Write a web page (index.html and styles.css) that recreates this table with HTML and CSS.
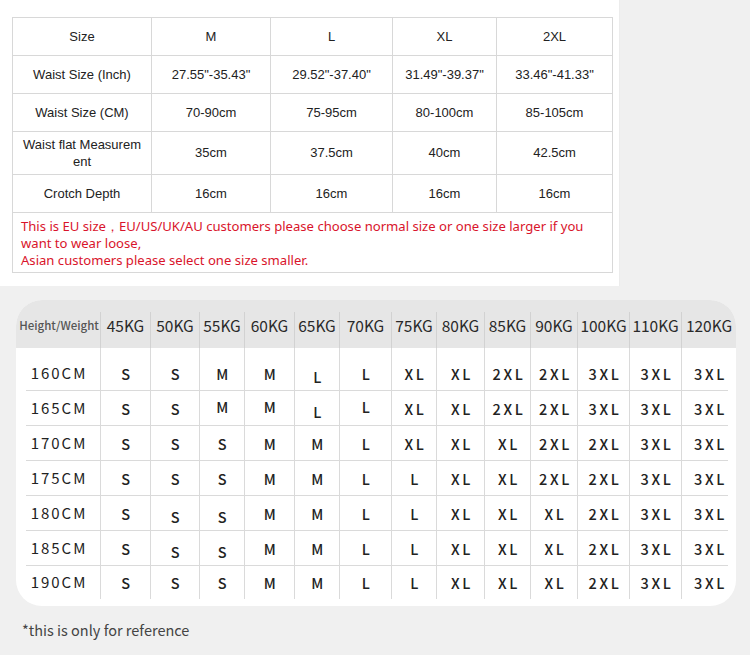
FILE: index.html
```html
<!DOCTYPE html>
<html lang="en">
<head>
<meta charset="utf-8">
<title>Size Chart</title>
<link rel="stylesheet" href="styles.css">
</head>
<body>
<section class="top">
  <table class="spec">
    <colgroup>
      <col class="c1"><col class="c2"><col class="c3"><col class="c4"><col class="c5">
    </colgroup>
    <tr class="r38"><td>Size</td><td>M</td><td>L</td><td>XL</td><td>2XL</td></tr>
    <tr class="r38"><td>Waist Size (Inch)</td><td>27.55"-35.43"</td><td>29.52"-37.40"</td><td>31.49"-39.37"</td><td>33.46"-41.33"</td></tr>
    <tr class="r38"><td>Waist Size (CM)</td><td>70-90cm</td><td>75-95cm</td><td>80-100cm</td><td>85-105cm</td></tr>
    <tr class="r43"><td class="wrap">Waist flat Measurem<br>ent</td><td>35cm</td><td>37.5cm</td><td>40cm</td><td>42.5cm</td></tr>
    <tr class="r38"><td>Crotch Depth</td><td>16cm</td><td>16cm</td><td>16cm</td><td>16cm</td></tr>
    <tr class="r60"><td colspan="5" class="note">This is EU size，EU/US/UK/AU customers please choose normal size or one size larger if you<br>want to wear loose,<br>Asian customers please select one size smaller.</td></tr>
  </table>
</section>
<section class="bottom">
  <div class="card">
    <div class="head grid">
      <div class="hc first">Height/Weight</div>
      <div class="hc">45KG</div><div class="hc">50KG</div><div class="hc">55KG</div><div class="hc">60KG</div><div class="hc">65KG</div><div class="hc">70KG</div><div class="hc">75KG</div><div class="hc">80KG</div><div class="hc">85KG</div><div class="hc">90KG</div><div class="hc">100KG</div><div class="hc">110KG</div><div class="hc">120KG</div>
    </div>
    <div class="body">
      <div class="row grid firstrow">
        <div class="c lab">160CM</div><div class="c">S</div><div class="c">S</div><div class="c">M</div><div class="c">M</div><div class="c lo">L</div><div class="c">L</div><div class="c">XL</div><div class="c">XL</div><div class="c">2XL</div><div class="c">2XL</div><div class="c">3XL</div><div class="c">3XL</div><div class="c">3XL</div>
      </div>
      <div class="row grid">
        <div class="c lab">165CM</div><div class="c">S</div><div class="c">S</div><div class="c hi">M</div><div class="c hi">M</div><div class="c lo">L</div><div class="c hi">L</div><div class="c">XL</div><div class="c">XL</div><div class="c">2XL</div><div class="c">2XL</div><div class="c">3XL</div><div class="c">3XL</div><div class="c">3XL</div>
      </div>
      <div class="row grid">
        <div class="c lab">170CM</div><div class="c">S</div><div class="c">S</div><div class="c">S</div><div class="c">M</div><div class="c">M</div><div class="c">L</div><div class="c">XL</div><div class="c">XL</div><div class="c">XL</div><div class="c">2XL</div><div class="c">2XL</div><div class="c">3XL</div><div class="c">3XL</div>
      </div>
      <div class="row grid">
        <div class="c lab">175CM</div><div class="c">S</div><div class="c">S</div><div class="c">S</div><div class="c">M</div><div class="c">M</div><div class="c">L</div><div class="c">L</div><div class="c">XL</div><div class="c">XL</div><div class="c">2XL</div><div class="c">2XL</div><div class="c">3XL</div><div class="c">3XL</div>
      </div>
      <div class="row grid">
        <div class="c lab">180CM</div><div class="c">S</div><div class="c lo">S</div><div class="c lo">S</div><div class="c">M</div><div class="c">M</div><div class="c">L</div><div class="c">L</div><div class="c">XL</div><div class="c">XL</div><div class="c">XL</div><div class="c">2XL</div><div class="c">3XL</div><div class="c">3XL</div>
      </div>
      <div class="row grid">
        <div class="c lab">185CM</div><div class="c">S</div><div class="c lo">S</div><div class="c lo">S</div><div class="c">M</div><div class="c">M</div><div class="c">L</div><div class="c">L</div><div class="c">XL</div><div class="c">XL</div><div class="c">XL</div><div class="c">2XL</div><div class="c">3XL</div><div class="c">3XL</div>
      </div>
      <div class="row grid lastrow">
        <div class="c lab">190CM</div><div class="c">S</div><div class="c">S</div><div class="c">S</div><div class="c">M</div><div class="c">M</div><div class="c">L</div><div class="c">L</div><div class="c">XL</div><div class="c">XL</div><div class="c">XL</div><div class="c">2XL</div><div class="c">3XL</div><div class="c">3XL</div>
      </div>
    </div>
  </div>
  <p class="foot">*this is only for reference</p>
</section>
</body>
</html>
```
FILE: styles.css
```css
* { box-sizing: border-box; }
html, body { margin: 0; padding: 0; }
body {
  width: 750px;
  height: 655px;
  overflow: hidden;
  background: #f0f0f0;
  font-family: "Liberation Sans", Arial, sans-serif;
}

/* ---------- top spec table ---------- */
.top {
  width: 620px;
  height: 286px;
  background: #fff;
  border-right: 1px solid #ececec;
  padding: 17px 0 0 12px;
}
.spec {
  border-collapse: collapse;
  table-layout: fixed;
  width: 600px;
  font-size: 13px;
  color: #222;
}
.spec col.c1 { width: 139px; }
.spec col.c2 { width: 119px; }
.spec col.c3 { width: 122px; }
.spec col.c4 { width: 104px; }
.spec col.c5 { width: 116px; }
.spec td {
  border: 1px solid #d8d8d8;
  text-align: center;
  vertical-align: middle;
  padding: 0 4px;
  line-height: 16px;
}
.spec tr.r38 { height: 38px; }
.spec tr.r43 { height: 43px; }
.spec tr.r60 { height: 60px; }
.spec td.wrap { line-height: 17px; }
.spec td.note {
  text-align: left;
  vertical-align: top;
  padding: 5px 8px 0 8px;
  color: #d9142b;
  font-family: "Noto Sans", "Open Sans", sans-serif;
  font-size: 13.1px;
  line-height: 17px;
  white-space: nowrap;
}

/* ---------- bottom chart ---------- */
.bottom {
  padding: 14px 0 0 16px;
}
.card {
  width: 720px;
  height: 306px;
  background: #fff;
  border-radius: 26px;
  overflow: hidden;
  font-family: "Noto Sans CJK SC", "Noto Sans", sans-serif;
}
.grid {
  display: grid;
  grid-template-columns: 84px 50px 49px 45px 50px 45px 52px 45px 48px 46px 47px 52px 52px 55px;
}
.head {
  background: #e6e6e6;
  padding-top: 12px;
  height: 48px;
}
.hc {
  height: 36px;
  padding-bottom: 10px;
  display: flex;
  align-items: center;
  justify-content: center;
  border-left: 1px solid #d2d2d2;
  font-size: 15.5px;
  color: #2a2a2a;
  white-space: nowrap;
}
.hc.first {
  border-left: none;
  font-size: 11.5px;
  font-weight: 500;
  color: #555;
  padding-left: 2px;
}
.row {
  position: relative;
  height: 35px;
}
.row::after {
  content: "";
  position: absolute;
  left: 10px;
  right: 8px;
  bottom: 0;
  height: 1px;
  background: #dadada;
}
.row.firstrow { height: 43px; }
.row.firstrow .c { padding-top: 8px; }
.row.lastrow { height: 33px; }
.row.lastrow::after { display: none; }
.c {
  display: flex;
  align-items: center;
  justify-content: center;
  border-left: 1px solid #dadada;
  font-size: 14.5px;
  font-weight: 500;
  letter-spacing: 2.6px;
  padding-left: 3px;
  color: #222;
}
.c.lab {
  border-left: none;
  font-weight: 400;
  font-size: 15px;
  letter-spacing: 2px;
  padding-left: 2px;
  padding-bottom: 2px;
}
.c.lo { padding-top: 6px; }
.row.firstrow .c.lo { padding-top: 14px; }
.c.hi { padding-bottom: 5px; }
.foot {
  margin: 14px 0 0 6px;
  font-family: "Noto Sans CJK SC", "Noto Sans", sans-serif;
  font-size: 14.5px;
  line-height: 20px;
  color: #444;
}
```
